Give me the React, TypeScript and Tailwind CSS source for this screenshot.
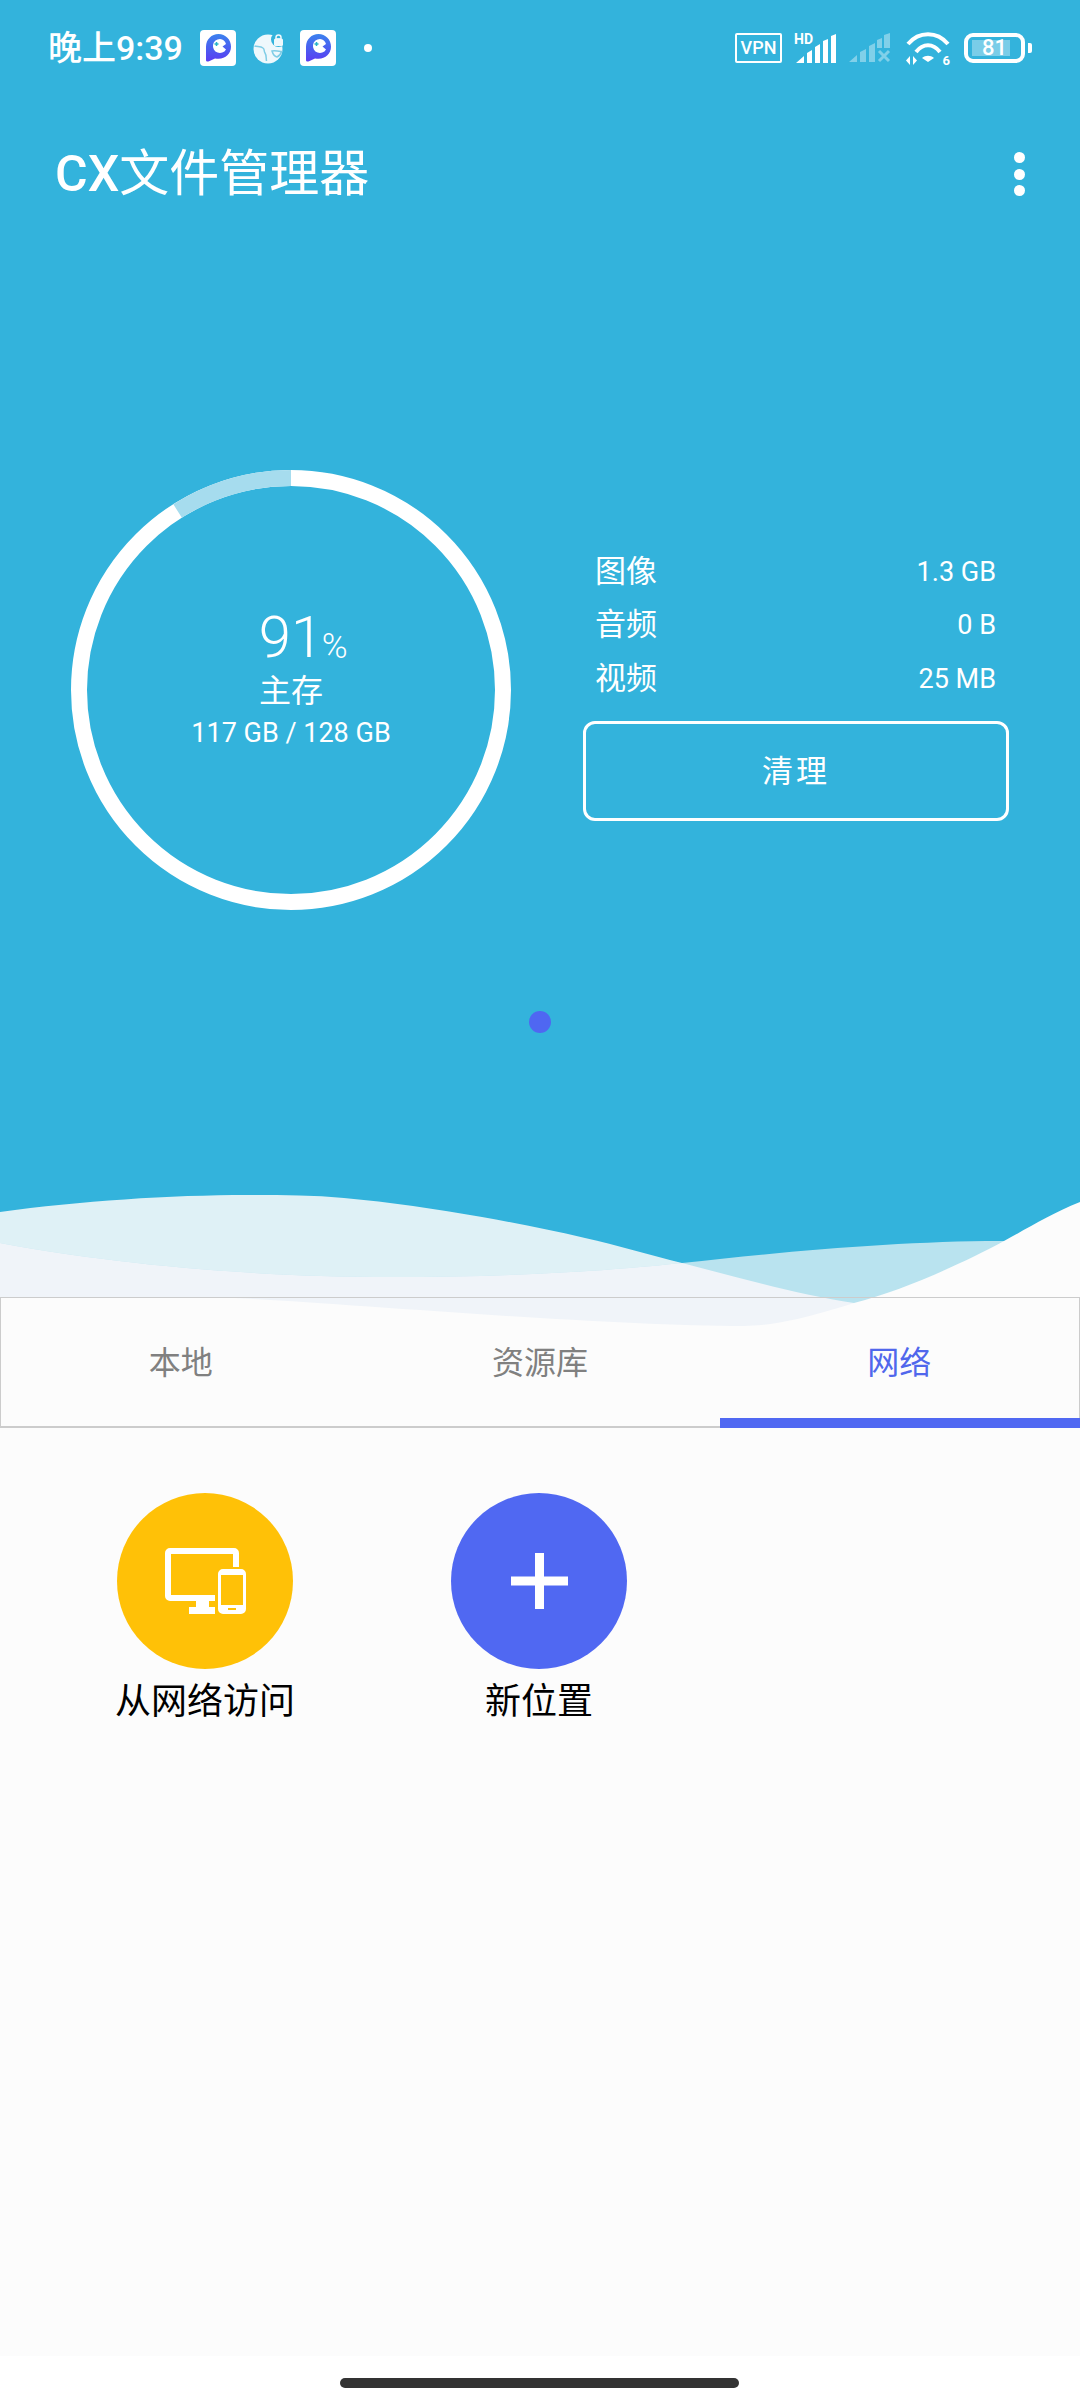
const AppBadge = ({ id }: { id: string }) => (
  <svg width="36" height="36" viewBox="0 0 36 36" className="shrink-0">
    <defs>
      <linearGradient id={id} x1="0" y1="0" x2="0" y2="1">
        <stop offset="0" stopColor="#3b82ee" />
        <stop offset="1" stopColor="#5a3cf2" />
      </linearGradient>
    </defs>
    <rect width="36" height="36" rx="4" fill="#ffffff" />
    <path d="M18.5 4C11.5 4 6 9.5 6 16.5V30c0 1.5 1.5 2 3 1.3l6-2.800c1 .2 2.500.3 3.500.3 7 0 12.500-5.300 12.500-12C31 9.500 25.500 4 18.500 4z" fill={`url(#${id})`} />
    <path d="M20 9a7 7 0 1 0 6 10.500l-3.500-3 3.500-2.500A7 7 0 0 0 20 9z" fill="#ffffff" />
    <path d="M16.500 12v4M14.500 14h4" stroke="#27b3c8" strokeWidth="1.5" />
  </svg>
);

const GlobeLock = () => (
  <svg width="34" height="34" viewBox="0 0 34 34" className="shrink-0">
    <circle cx="16" cy="18" r="14.5" fill="#eef8fc" />
    <path d="M2.500 15c3 1 6 0 8.500 2 2 1.500 .5 3 2 5 1.500 2 1 5 1.500 8M20 20c3-.5 6 0 9.500 .5-.5 2-2.500 4.500-4.500 5.500-2-.5-4-2.500-5-6z" fill="none" stroke="#7fcde6" strokeWidth="1.5" />
    <circle cx="26.500" cy="8.500" r="7.500" fill="#33b3dc" />
    <path d="M24 6.500a2.500 2.500 0 0 1 5 0V8h-5z" fill="none" stroke="#eef8fc" strokeWidth="1.5" />
    <rect x="22" y="7.500" width="9" height="7.500" rx="1.5" fill="#eef8fc" />
  </svg>
);

const HdSignal = () => (
  <div className="relative h-[30px] w-[42px] shrink-0">
    <span className="absolute left-0 top-0 text-[14px] font-bold leading-[12px]">HD</span>
    <svg width="42" height="30" viewBox="0 0 42 30" className="absolute inset-0">
      <path d="M2 30l8-7v7zM13 20l5-3v13h-5zM21 14l5-3v19h-5zM29 8l5-2v24h-5zM37 3l5-2v29h-5z" fill="#ffffff" />
    </svg>
  </div>
);

const MutedSignal = () => (
  <svg width="42" height="30" viewBox="0 0 42 30" className="shrink-0">
    <g fill="#ffffff" opacity="0.38">
      <path d="M0 29l8-7v7zM11 19l6-3v13h-6zM20 13l6-3v19h-6zM28 7l5-2v10h-5zM35 2l6-2v15h-6z" />
      <path d="M30 18l10 10M40 18L30 28" stroke="#ffffff" strokeWidth="3" fill="none" />
    </g>
  </svg>
);

const Wifi = () => (
  <div className="relative h-[34px] w-[44px] shrink-0">
    <svg width="44" height="34" viewBox="0 0 44 34" className="absolute inset-0">
      <g fill="none" stroke="#ffffff" strokeWidth="4">
        <path d="M2 12C13 -1 31 -1 42 12" />
        <path d="M10 20C17 11 27 11 34 20" />
      </g>
      <path d="M16 26C19.500 23 24.500 23 28 26L22 30z" fill="#ffffff" />
      <path d="M4 24v9L0 28.500zM7 24v9l4-4.500z" fill="#ffffff" />
    </svg>
    <span className="absolute bottom-0 right-0 text-[13px] font-bold leading-[11px]">6</span>
  </div>
);

const StatusBar = () => (
  <div className="mt-[24px] flex h-[48px] items-center justify-between pl-[48px] pr-[48px] text-white">
    <div className="flex items-center">
      <span className="text-[34px] font-medium leading-none">晚上9:39</span>
      <div className="ml-[17px]"><AppBadge id="badge-a" /></div>
      <div className="ml-[16px]"><GlobeLock /></div>
      <div className="ml-[14px]"><AppBadge id="badge-b" /></div>
      <span className="ml-[28px] h-[8px] w-[8px] rounded-full bg-white"></span>
    </div>
    <div className="flex items-center">
      <div className="flex h-[30px] w-[47px] items-center justify-center rounded-[2px] border-[2.5px] border-white text-[18px] font-medium leading-none">VPN</div>
      <div className="ml-[12px]"><HdSignal /></div>
      <div className="ml-[13px]"><MutedSignal /></div>
      <div className="ml-[15px] mt-[2px]"><Wifi /></div>
      <div className="ml-[14px] flex items-center">
        <div className="relative flex h-[30px] w-[61px] items-center justify-center rounded-[9px] border-4 border-white">
          <div className="absolute left-[4px] top-[3px] h-[16px] w-[38px] bg-white/35"></div>
          <span className="relative text-[22px] font-medium leading-none">81</span>
        </div>
        <div className="ml-[3px] h-[10px] w-[4px] rounded-r-[2px] bg-white"></div>
      </div>
    </div>
  </div>
);

const StorageRing = () => (
  <div className="relative h-[440px] w-[440px] shrink-0">
    <svg width="440" height="440" viewBox="0 0 440 440" className="absolute inset-0">
      <circle cx="220" cy="220" r="212" fill="none" stroke="#ffffff" strokeWidth="16" />
      <path d="M220 8A212 212 0 0 0 106.600 41" fill="none" stroke="#a6dcee" strokeWidth="16" />
    </svg>
    <div className="relative flex h-full flex-col items-center pt-[138px] text-white">
      <div className="relative text-[58px] font-light leading-[58px]">
        91
        <span className="absolute left-[63px] top-[18px] text-[35px] font-light leading-[42px]">%</span>
      </div>
      <div className="mt-[5px] text-[32px] leading-[40px]">主存</div>
      <div className="mt-[6px] text-[27px] leading-[32px]">117 GB / 128 GB</div>
    </div>
  </div>
);

const stats = [
  { label: '图像', value: '1.3 GB' },
  { label: '音频', value: '0 B' },
  { label: '视频', value: '25 MB' },
];

const StorageStats = () => (
  <div className="ml-[72px] w-[426px] pt-[75px] text-white">
    {stats.map((s) => (
      <div key={s.label} className="flex h-[53.5px] items-center justify-between pl-[12px] pr-[13px]">
        <span className="text-[31px]">{s.label}</span>
        <span className="text-[27px]">{s.value}</span>
      </div>
    ))}
    <button className="mt-[15px] flex h-[100px] w-full items-center justify-center rounded-[12px] border-[3px] border-white pt-[4px] text-[31px] tracking-[3px]">
      清理
    </button>
  </div>
);

const wave1 = 'M0 1212C80 1201 170 1195 248 1195C280 1195 312 1195 344 1198C390 1202 436 1209 482 1217C516 1223 551 1230 585 1238C617 1245 650 1255 682 1263C740 1278 800 1295 854 1303L900 1340L0 1340Z';
const wave2 = 'M0 1243C80 1258 220 1277 392 1277C500 1277 600 1272 682 1263C780 1252 900 1241 1000 1241L1080 1241L1080 1340L0 1340Z';

const Waves = () => (
  <svg width="1080" height="160" viewBox="0 1180 1080 160" className="absolute left-0 top-[1180px]">
    <defs>
      <clipPath id="wave-overlap">
        <path d={wave1} />
      </clipPath>
    </defs>
    <path d={wave1} fill="#dff1f6" />
    <path d={wave2} fill="#b9e3ef" />
    <path d={wave2} fill="#f0f4f9" clipPath="url(#wave-overlap)" />
    <path d="M0 1298L234 1298C340 1303 600 1326 744 1326C770 1326 800 1320 854 1303C905 1290 965 1262 1004 1241C1030 1227 1050 1214 1080 1202L1080 1340L0 1340Z" fill="#fcfcfc" />
  </svg>
);

const Tabs = () => (
  <div className="relative flex h-[131px] border-x border-t border-b-2 border-[#cccccc]">
    <div className="flex w-1/3 items-center justify-center pt-[1px] text-[32px] text-[#808080]">本地</div>
    <div className="flex w-1/3 items-center justify-center pt-[1px] text-[32px] text-[#808080]">资源库</div>
    <div className="relative flex w-1/3 items-center justify-center pt-[1px] text-[32px] text-[#5067ec]">
      网络
      <div className="absolute bottom-[-2px] left-0 right-[-1px] h-[10px] bg-[#5068f2]"></div>
    </div>
  </div>
);

const Shortcut = ({ label, color, children }: { label: string; color: string; children: React.ReactNode }) => (
  <div className="flex w-[218px] flex-col items-center">
    <div className={`flex h-[176px] w-[176px] items-center justify-center rounded-full ${color}`}>{children}</div>
    <div className="mt-[10px] whitespace-nowrap text-[36px] leading-[46px] text-black">{label}</div>
  </div>
);

export default function App() {
  return (
    <div className="relative flex h-[2400px] w-[1080px] flex-col overflow-hidden bg-white font-[Roboto,'Noto_Sans_CJK_SC',sans-serif]">
      <div className="h-[1297px] shrink-0 bg-[#33b3dc]">
        <StatusBar />
        <div className="mt-[59px] flex h-[84px] items-center justify-between pl-[55px] pr-[55px] pt-[2px] text-white">
          <div className="text-[50px] leading-none">
            <span className="font-medium">CX</span>文件管理器
          </div>
          <div className="flex flex-col gap-[5.5px]">
            <span className="h-[11px] w-[11px] rounded-full bg-white"></span>
            <span className="h-[11px] w-[11px] rounded-full bg-white"></span>
            <span className="h-[11px] w-[11px] rounded-full bg-white"></span>
          </div>
        </div>
        <div className="mt-[255px] flex pl-[71px]">
          <StorageRing />
          <StorageStats />
        </div>
        <div className="mt-[101px] flex justify-center pr-[1px]">
          <span className="h-[22px] w-[22px] rounded-full bg-[#4f67f2]"></span>
        </div>
        <Waves />
      </div>
      <div className="flex flex-1 flex-col bg-[#fcfcfc]">
        <Tabs />
        <div className="flex gap-[116px] pl-[96px] pt-[65px]">
          <Shortcut label="从网络访问" color="bg-[#ffc107]">
            <svg width="81" height="66" viewBox="0 0 81 66">
              <path d="M5 0h64a5 5 0 0 1 5 5v14h-6V6H6v41h44v6H5a5 5 0 0 1-5-5V5a5 5 0 0 1 5-5z" fill="#ffffff" />
              <path d="M31 53h13v6h6v7H24v-7h7z" fill="#ffffff" />
              <path fillRule="evenodd" d="M58 21h18a5 5 0 0 1 5 5v35a5 5 0 0 1-5 5H58a5 5 0 0 1-5-5V26a5 5 0 0 1 5-5zm-2 6v30h22V27zm7 33v2h8v-2z" fill="#ffffff" />
            </svg>
          </Shortcut>
          <Shortcut label="新位置" color="bg-[#5068f2]">
            <svg width="57" height="56" viewBox="0 0 57 56">
              <path d="M24 0h9v23.500h24v9H33V56h-9V32.500H0v-9h24z" fill="#ffffff" />
            </svg>
          </Shortcut>
        </div>
      </div>
      <div className="flex h-[44px] shrink-0 items-start justify-center bg-white pr-[1px] pt-[22px]">
        <div className="h-[10px] w-[399px] rounded-full bg-[#333333]"></div>
      </div>
    </div>
  );
}
